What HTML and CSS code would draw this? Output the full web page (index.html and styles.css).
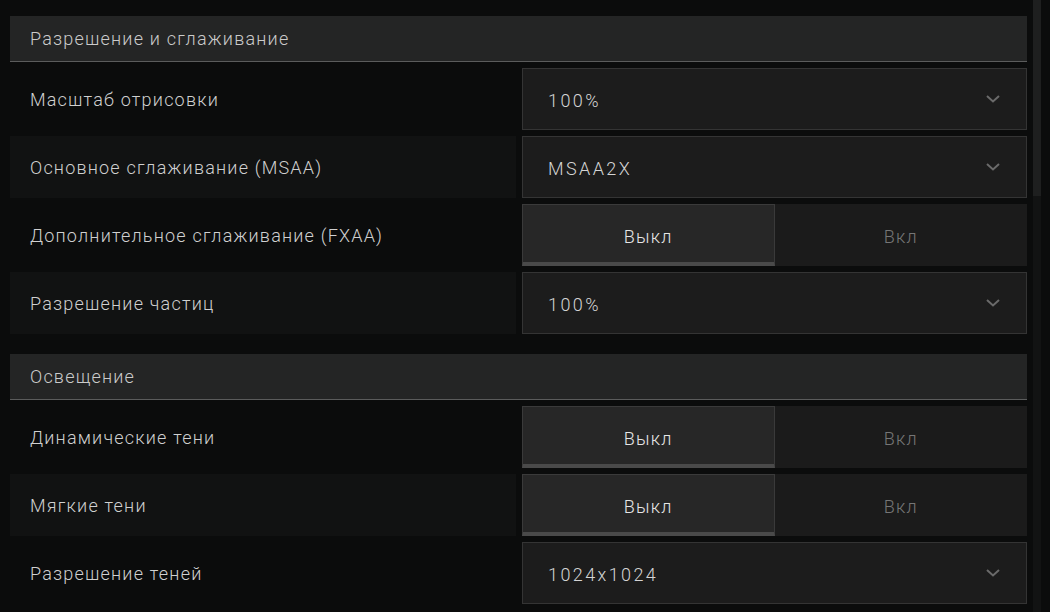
FILE: index.html
```html
<!DOCTYPE html>
<html lang="ru">
<head>
<meta charset="utf-8">
<link rel="stylesheet" href="styles.css">
</head>
<body>
<div class="page">
  <div class="content">
    <section class="section">
      <div class="section-head">Разрешение и сглаживание</div>
      <div class="row">
        <div class="label">Масштаб отрисовки</div>
        <div class="select"><span class="value">100%</span><svg class="chev" width="14" height="8" viewBox="0 0 14 8"><polyline points="1,1 7,6.5 13,1" /></svg></div>
      </div>
      <div class="row alt">
        <div class="label">Основное сглаживание (MSAA)</div>
        <div class="select"><span class="value">MSAA2X</span><svg class="chev" width="14" height="8" viewBox="0 0 14 8"><polyline points="1,1 7,6.5 13,1" /></svg></div>
      </div>
      <div class="row">
        <div class="label">Дополнительное сглаживание (FXAA)</div>
        <div class="toggle"><div class="opt on">Выкл</div><div class="opt">Вкл</div></div>
      </div>
      <div class="row alt">
        <div class="label">Разрешение частиц</div>
        <div class="select"><span class="value">100%</span><svg class="chev" width="14" height="8" viewBox="0 0 14 8"><polyline points="1,1 7,6.5 13,1" /></svg></div>
      </div>
    </section>
    <section class="section">
      <div class="section-head">Освещение</div>
      <div class="row">
        <div class="label">Динамические тени</div>
        <div class="toggle"><div class="opt on">Выкл</div><div class="opt">Вкл</div></div>
      </div>
      <div class="row alt">
        <div class="label">Мягкие тени</div>
        <div class="toggle"><div class="opt on">Выкл</div><div class="opt">Вкл</div></div>
      </div>
      <div class="row">
        <div class="label">Разрешение теней</div>
        <div class="select"><span class="value">1024x1024</span><svg class="chev" width="14" height="8" viewBox="0 0 14 8"><polyline points="1,1 7,6.5 13,1" /></svg></div>
      </div>
    </section>
  </div>
  <div class="scrolltrack"><div class="thumb"></div></div>
</div>
</body>
</html>
```

FILE: styles.css
```css
html, body {
  margin: 0;
  padding: 0;
  background: #0b0c0c;
  height: 100%;
  overflow: hidden;
}
body {
  font-family: Roboto, "Noto Sans", sans-serif;
  font-size: 18px;
  font-weight: 300;
  letter-spacing: 1.2px;
  color: #cfcfcf;
}
.page {
  display: flex;
  height: 612px;
  padding-left: 10px;
  gap: 6px;
}
.content {
  width: 1017px;
  padding-top: 16px;
  display: flex;
  flex-direction: column;
  gap: 20px;
}
.section {
  display: flex;
  flex-direction: column;
  gap: 6px;
}
.section-head {
  height: 45px;
  background: #242525;
  border-bottom: 1px solid #5b5c5c;
  display: flex;
  align-items: center;
  padding-left: 20px;
  color: #cbcbcb;
}
.row {
  display: grid;
  grid-template-columns: 506px 505px;
  column-gap: 6px;
  height: 62px;
}
.row.alt .label {
  background: #111212;
}
.label {
  display: flex;
  align-items: center;
  padding-left: 20px;
  color: #d0d0d0;
}
.select {
  background: #1c1c1c;
  border: 1px solid #343434;
  display: flex;
  align-items: center;
  justify-content: space-between;
  padding: 2px 26px 0 25px;
  color: #d4d4d4;
}
.chev {
  margin-top: -2px;
}
.value {
  letter-spacing: 2.4px;
}
.chev polyline {
  fill: none;
  stroke: #6a6a6a;
  stroke-width: 2;
}
.toggle {
  display: grid;
  grid-template-columns: 1fr 1fr;
  background: #1b1b1b;
}
.opt {
  display: flex;
  align-items: center;
  justify-content: center;
  padding-top: 3px;
  color: #767676;
}
.opt.on {
  background: #272727;
  border: 1px solid #3a3a3a;
  border-bottom: 4px solid #4a4a4a;
  padding-top: 5px;
  color: #e6e6e6;
}
.scrolltrack {
  width: 8px;
  height: 612px;
  background: #121313;
}
.thumb {
  height: 196px;
  background: #1e1f1f;
}
```
